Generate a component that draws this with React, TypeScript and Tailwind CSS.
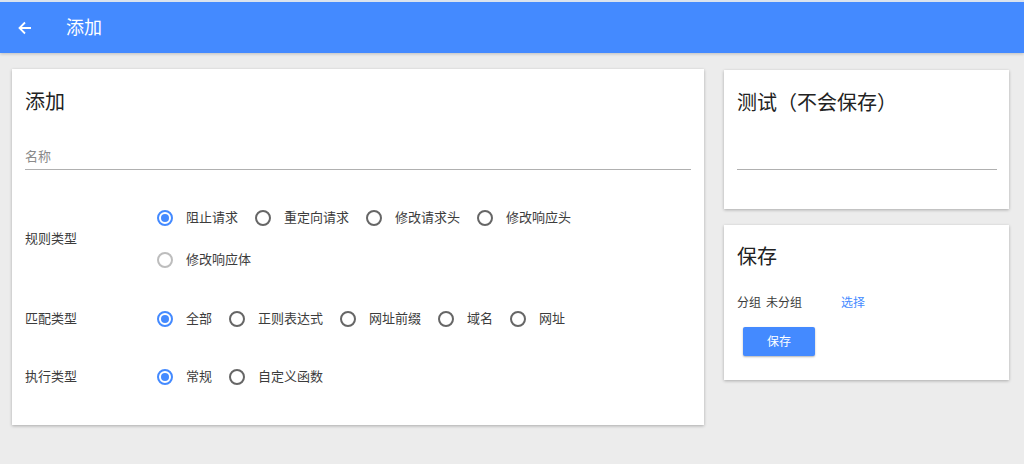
import React from "react";

const FONT = { fontFamily: 'Roboto, "Noto Sans CJK SC", sans-serif' };

type RState = "on" | "off" | "disabled";

function Radio({ state, label }: { state: RState; label: string }) {
  const ring =
    state === "on"
      ? "border-[#448aff]"
      : state === "disabled"
      ? "border-[#bdbdbd]"
      : "border-[#666666]";
  return (
    <div className="flex items-center mr-[17px]">
      <div
        className={`w-[16px] h-[16px] rounded-full border-2 ${ring} flex items-center justify-center`}
      >
        {state === "on" && <div className="w-[8px] h-[8px] rounded-full bg-[#448aff]" />}
      </div>
      <span className="ml-[13px] text-[13px] leading-[20px] text-[#3c3c3c]">{label}</span>
    </div>
  );
}

function Row({ children }: { children: React.ReactNode }) {
  return <div className="h-[42px] flex items-center">{children}</div>;
}

export default function App() {
  return (
    <div className="w-[1024px] h-[464px] bg-[#ececec] overflow-hidden" style={FONT}>
      <header className="h-[53px] border-t-2 border-[#dbe3ee] bg-[#448aff] flex items-center shadow-[0_1px_3px_rgba(0,0,0,0.2)] relative z-10">
        <svg width="14" height="14" viewBox="0 0 14 14" className="ml-[18px]">
          <path d="M13 7H2M7 1.5L1.5 7L7 12.5" stroke="white" strokeWidth="1.8" fill="none" />
        </svg>
        <span className="ml-[34px] text-[18px] text-white">添加</span>
      </header>

      <div className="flex items-start pl-[12px] pt-[16px] gap-[20px]">
        <div className="w-[692px] h-[356px] bg-white shadow-[0_1px_3px_rgba(0,0,0,0.28)] pl-[13px] pr-[13px] pt-[19px]">
          <div className="text-[20px] leading-[28px] text-[#222]">添加</div>
          <div className="mt-[32px] border-b border-[#b0b0b0] h-[22px]">
            <span className="block text-[13px] leading-[18px] text-[#8a8a8a]">名称</span>
          </div>

          <div className="mt-[27px] flex items-center">
            <div className="w-[132px] text-[13px] text-[#3c3c3c]">规则类型</div>
            <div>
              <Row>
                <Radio state="on" label="阻止请求" />
                <Radio state="off" label="重定向请求" />
                <Radio state="off" label="修改请求头" />
                <Radio state="off" label="修改响应头" />
              </Row>
              <Row>
                <Radio state="disabled" label="修改响应体" />
              </Row>
            </div>
          </div>

          <div className="mt-[17px] flex items-center">
            <div className="w-[132px] text-[13px] text-[#3c3c3c]">匹配类型</div>
            <Row>
              <Radio state="on" label="全部" />
              <Radio state="off" label="正则表达式" />
              <Radio state="off" label="网址前缀" />
              <Radio state="off" label="域名" />
              <Radio state="off" label="网址" />
            </Row>
          </div>

          <div className="mt-[16px] flex items-center">
            <div className="w-[132px] text-[13px] text-[#3c3c3c]">执行类型</div>
            <Row>
              <Radio state="on" label="常规" />
              <Radio state="off" label="自定义函数" />
            </Row>
          </div>
        </div>

        <div className="w-[285px] flex flex-col gap-[16px] pt-[1px]">
          <div className="h-[139px] bg-white shadow-[0_1px_3px_rgba(0,0,0,0.28)] pl-[13px] pr-[12px] pt-[19px]">
            <div className="text-[20px] leading-[28px] text-[#222]">测试（不会保存）</div>
            <div className="h-[53px] border-b border-[#b0b0b0]" />
          </div>

          <div className="h-[155px] bg-white shadow-[0_1px_3px_rgba(0,0,0,0.28)] pl-[13px] pr-[12px] pt-[18px]">
            <div className="text-[20px] leading-[28px] text-[#222]">保存</div>
            <div className="mt-[24px] flex items-center text-[12px] leading-[16px] text-[#3c3c3c]">
              <span>分组</span>
              <span className="ml-[5px] w-[75px]">未分组</span>
              <span className="text-[#448aff]">选择</span>
            </div>
            <button className="mt-[16px] ml-[6px] w-[72px] h-[29px] bg-[#448aff] text-white text-[12px] rounded-[2px] shadow-[0_1px_2px_rgba(0,0,0,0.3)]">
              保存
            </button>
          </div>
        </div>
      </div>
    </div>
  );
}
